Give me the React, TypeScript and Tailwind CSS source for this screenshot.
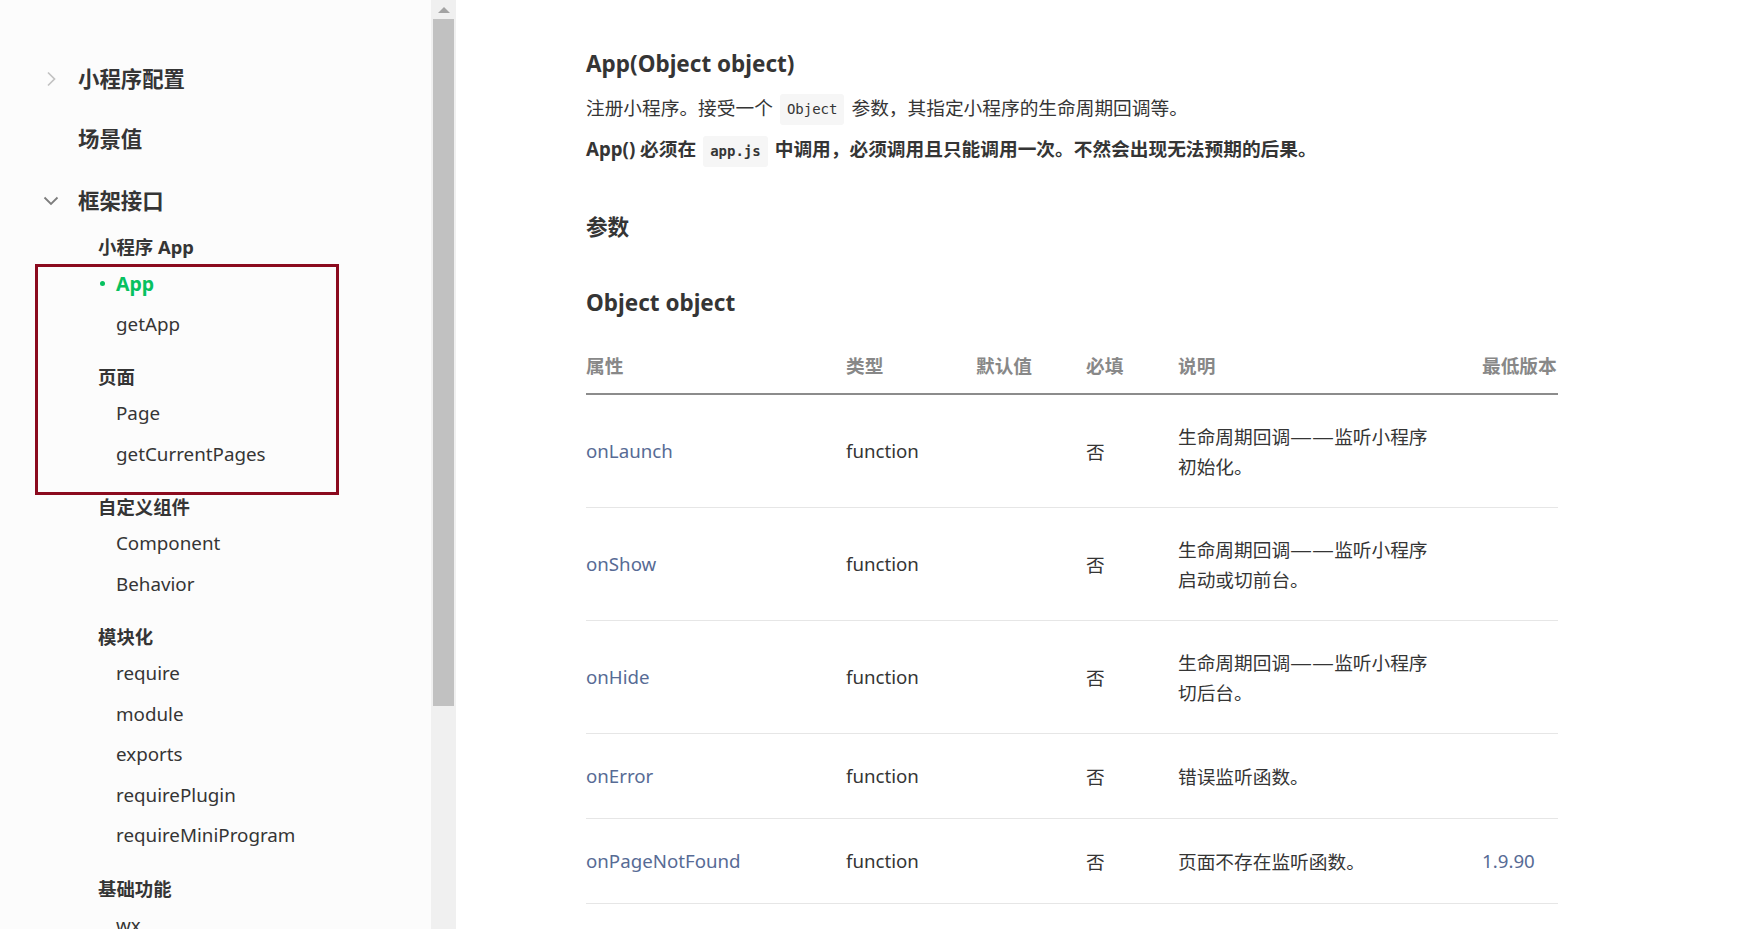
import React from "react";

const rows = [
  { name: "onLaunch", desc: ["生命周期回调", "监听小程序", "初始化。"], ver: "" },
  { name: "onShow", desc: ["生命周期回调", "监听小程序", "启动或切前台。"], ver: "" },
  { name: "onHide", desc: ["生命周期回调", "监听小程序", "切后台。"], ver: "" },
  { name: "onError", desc: ["错误监听函数。"], ver: "" },
  { name: "onPageNotFound", desc: ["页面不存在监听函数。"], ver: "1.9.90" },
];

const groups = [
  { title: "小程序 App", items: ["App", "getApp"], active: "App" },
  { title: "页面", items: ["Page", "getCurrentPages"] },
  { title: "自定义组件", items: ["Component", "Behavior"] },
  { title: "模块化", items: ["require", "module", "exports", "requirePlugin", "requireMiniProgram"] },
  { title: "基础功能", items: ["wx"] },
];

function ChevronRight() {
  return (
    <svg width="10" height="16" viewBox="0 0 10 16" className="ml-[46px]">
      <path d="M2 1.5 L8.5 8 L2 14.5" fill="none" stroke="#c2c2c2" strokeWidth="1.7" />
    </svg>
  );
}

function ChevronDown() {
  return (
    <svg width="16" height="10" viewBox="0 0 16 10" className="ml-[43px]">
      <path d="M1.5 1.5 L8 8 L14.5 1.5" fill="none" stroke="#7d7d7d" strokeWidth="1.8" />
    </svg>
  );
}

function Sidebar() {
  return (
    <aside className="relative w-[431px] h-[929px] shrink-0 bg-[#fcfcfc] pt-[49px] text-[#353535] overflow-hidden">
      <div className="flex h-[60px] items-center">
        <div className="w-[78px] flex items-center">
          <ChevronRight />
        </div>
        <span className="text-[21.4px] font-bold">小程序配置</span>
      </div>
      <div className="flex h-[60px] items-center">
        <div className="w-[78px]" />
        <span className="text-[21.4px] font-bold">场景值</span>
      </div>
      <div className="flex h-[62px] items-center pt-[2px]">
        <div className="w-[78px] flex items-center">
          <ChevronDown />
        </div>
        <span className="text-[21.4px] font-bold">框架接口</span>
      </div>
      <div className="pl-[98px]">
        {groups.map((g, gi) => (
          <div key={g.title} className={gi === 0 ? "" : "mt-[17px]"}>
            <div className="leading-[32px] text-[18.4px] font-bold">{g.title}</div>
            {g.items.map((it) =>
              it === g.active ? (
                <div key={it} className="flex h-[40.5px] items-center pl-[18px] text-[19.5px] font-bold text-[#07c160]">
                  <span className="-ml-[16px] mr-[11px] h-[5px] w-[5px] rounded-full bg-[#07c160]" />
                  {it}
                </div>
              ) : (
                <div key={it} className="flex h-[40.5px] items-center pl-[18px] text-[18.8px]">
                  {it}
                </div>
              )
            )}
          </div>
        ))}
      </div>
      <div className="pointer-events-none absolute left-[35px] top-[264px] h-[231px] w-[304px] border-[3px] border-[#8b0a1e]" />
    </aside>
  );
}

function Scrollbar() {
  return (
    <div className="flex h-[929px] w-[25px] shrink-0 flex-col items-center bg-[#f0f0f0]">
      <div className="flex h-[19px] w-full items-center justify-center">
        <div className="h-0 w-0 border-x-[6px] border-b-[6px] border-x-transparent border-b-[#a3a3a3]" />
      </div>
      <div className="h-[687px] w-[21px] bg-[#c1c1c1]" />
    </div>
  );
}

const cols = "grid grid-cols-[260px_130px_110px_92px_304px_76px]";

function Main() {
  return (
    <main className="flex-1 h-[929px] overflow-hidden bg-white pl-[130px] pt-[49px] text-[#353535]">
      <h1 className="text-[22.5px] font-bold leading-[30px]">App(Object object)</h1>
      <p className="mt-[13px] text-[18.7px] leading-[32px]">
        注册小程序。接受一个
        <code className="mx-[7px] inline-block h-[31px] rounded-[3px] bg-[#f6f6f6] px-[7px] align-middle font-['DejaVu_Sans_Mono',monospace] text-[14px] leading-[31px] text-[#353535]">
          Object
        </code>
        参数，其指定小程序的生命周期回调等。
      </p>
      <p className="mt-[8px] text-[18.7px] font-bold leading-[32px]">
        App() 必须在
        <code className="mx-[7px] inline-block h-[31px] rounded-[3px] bg-[#f6f6f6] px-[7px] align-middle font-['DejaVu_Sans_Mono',monospace] text-[14px] font-bold leading-[31px] text-[#353535]">
          app.js
        </code>
        中调用，必须调用且只能调用一次。不然会出现无法预期的后果。
      </p>
      <h2 className="mt-[45px] text-[21.6px] font-bold leading-[30px]">参数</h2>
      <h3 className="mt-[46px] text-[22.5px] font-bold leading-[30px]">Object object</h3>
      <div className="w-[972px]">
        <div className={`${cols} items-center border-b-2 border-[#8c8c8c] pb-[12px] pt-[32px] text-[18.7px] font-bold leading-[31px] text-[#888888]`}>
          <div>属性</div>
          <div>类型</div>
          <div>默认值</div>
          <div>必填</div>
          <div>说明</div>
          <div className="whitespace-nowrap">最低版本</div>
        </div>
        {rows.map((r) => (
          <div key={r.name} className={`${cols} min-h-[85px] items-center border-b border-[#e6e6e6] py-[26px] text-[18.7px] leading-[30px]`}>
            <div className="text-[#576b95]">{r.name}</div>
            <div>function</div>
            <div></div>
            <div className="font-['Noto_Sans_CJK_SC',sans-serif]">否</div>
            <div className="font-['Noto_Sans_CJK_SC',sans-serif]">
              {r.desc.length === 3 ? (
                <>
                  <div className="flex h-[30px] items-center whitespace-nowrap">
                    <span>{r.desc[0]}</span>
                    <span className="h-[30px] w-[44px] overflow-hidden leading-[30px]">
                      <span className="inline-block origin-left scale-x-[1.18] font-['DejaVu_Sans',sans-serif] leading-[30px]">——</span>
                    </span>
                    <span>{r.desc[1]}</span>
                  </div>
                  <div className="whitespace-nowrap">{r.desc[2]}</div>
                </>
              ) : (
                <div className="whitespace-nowrap">{r.desc[0]}</div>
              )}
            </div>
            <div className="text-[#576b95]">{r.ver}</div>
          </div>
        ))}
      </div>
    </main>
  );
}

export default function App() {
  return (
    <div className="flex h-[929px] w-full overflow-hidden bg-white font-['Noto_Sans','Noto_Sans_CJK_SC',sans-serif]">
      <Sidebar />
      <Scrollbar />
      <Main />
    </div>
  );
}
